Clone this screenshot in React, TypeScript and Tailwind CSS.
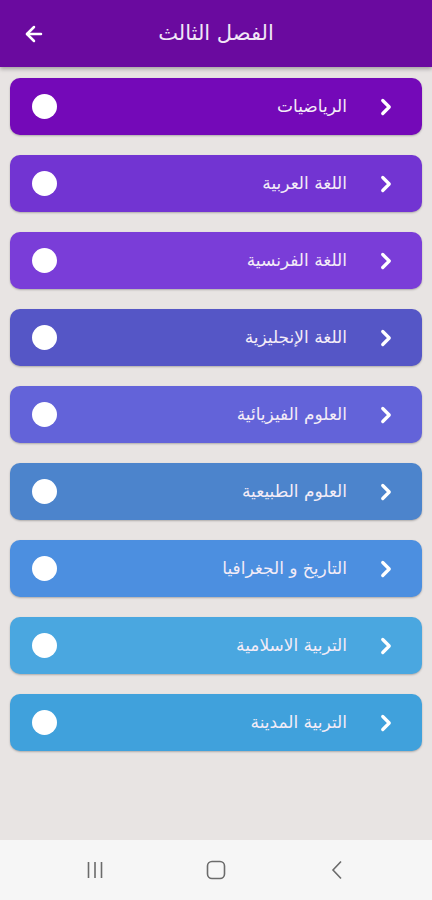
import React from 'react';
import { ArrowLeft, ChevronRight } from 'lucide-react';

const subjects = [
  { name: 'الرياضيات', color: 'bg-[#7409b8]' },
  { name: 'اللغة العربية', color: 'bg-[#7234d2]' },
  { name: 'اللغة الفرنسية', color: 'bg-[#7a3dd8]' },
  { name: 'اللغة الإنجليزية', color: 'bg-[#5556c6]' },
  { name: 'العلوم الفيزيائية', color: 'bg-[#6363d9]' },
  { name: 'العلوم الطبيعية', color: 'bg-[#4c84cc]' },
  { name: 'التاريخ و الجغرافيا', color: 'bg-[#4c8fe0]' },
  { name: 'التربية الاسلامية', color: 'bg-[#4aa7e0]' },
  { name: 'التربية المدينة', color: 'bg-[#40a1dc]' },
];

function SubjectCard({ name, color }: { name: string; color: string }) {
  return (
    <div
      className={`${color} h-[57px] rounded-[10px] shadow-[0_1px_2px_rgba(0,0,0,0.25)] flex items-center pl-[22px] pr-[23px]`}
    >
      <div className="w-[25px] h-[25px] rounded-full bg-white" />
      <div className="flex-1" />
      <span dir="rtl" className="text-[17px] text-[#f3ecf7] leading-none">
        {name}
      </span>
      <ChevronRight className="w-[26px] h-[26px] text-white ml-[26px]" strokeWidth={3} />
    </div>
  );
}

export default function App() {
  return (
    <div className="w-[432px] h-[900px] flex flex-col bg-[#e8e4e3] font-['DejaVu_Sans',sans-serif]">
      <header className="h-[67px] bg-[#6a0a9f] shadow-[0_2px_4px_rgba(0,0,0,0.3)] flex items-center relative z-10">
        <ArrowLeft className="w-[24px] h-[24px] text-white ml-[22px]" strokeWidth={2.5} />
        <h1 dir="rtl" className="absolute left-0 right-0 text-center text-[21px] text-[#f1e6f6] leading-none">
          الفصل الثالث
        </h1>
      </header>
      <main className="flex-1 flex flex-col gap-[20px] px-[10px] pt-[11px]">
        {subjects.map((s) => (
          <SubjectCard key={s.name} name={s.name} color={s.color} />
        ))}
      </main>
      <nav className="h-[60px] bg-[#f6f6f6] flex items-center justify-center gap-[101px]">
        <svg width="20" height="20" viewBox="0 0 20 20" className="text-[#6b6b6b]">
          <path d="M3.5 2v16M10 2v16M16.5 2v16" stroke="currentColor" strokeWidth="1.6" />
        </svg>
        <svg width="20" height="20" viewBox="0 0 20 20" className="text-[#6b6b6b]">
          <rect x="1.5" y="1.5" width="17" height="17" rx="4.5" fill="none" stroke="currentColor" strokeWidth="1.6" />
        </svg>
        <svg width="20" height="20" viewBox="0 0 20 20" className="text-[#6b6b6b]">
          <path d="M14 1.5L6 10l8 8.5" fill="none" stroke="currentColor" strokeWidth="1.6" />
        </svg>
      </nav>
    </div>
  );
}
